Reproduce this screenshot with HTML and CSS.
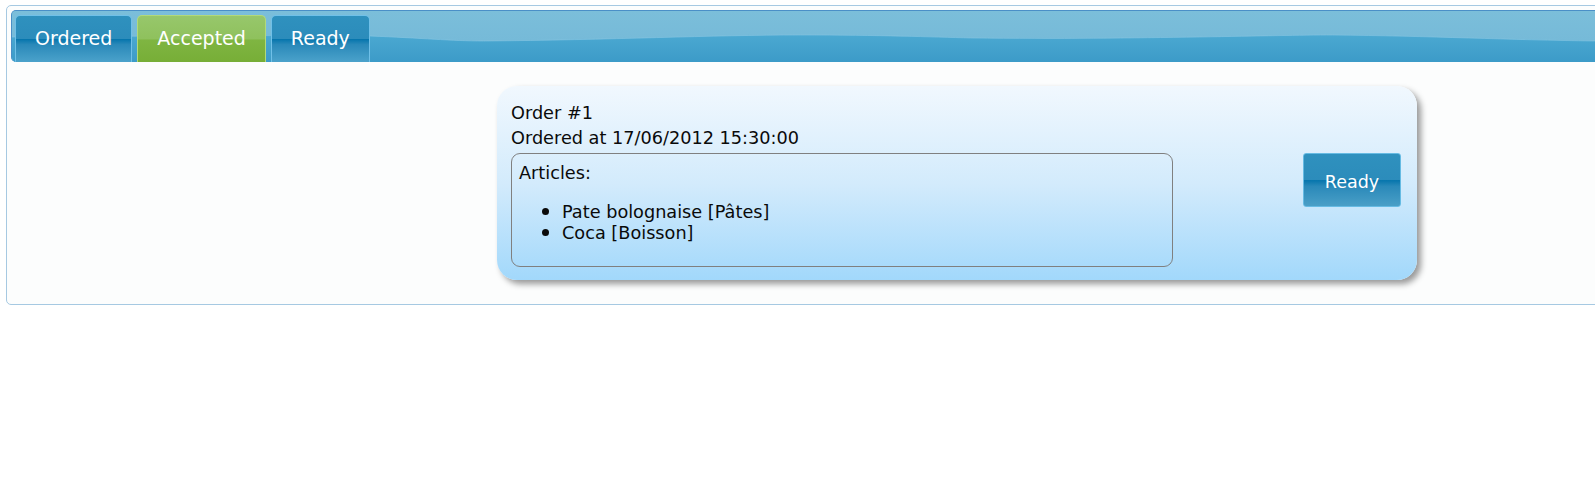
FILE: index.html
```html
<!DOCTYPE html>
<html>
<head>
<meta charset="utf-8">
<title>Orders</title>
<link rel="stylesheet" href="styles.css">
</head>
<body>
<div class="tabs">
  <div class="tab-header">
    <svg class="wave" viewBox="0 0 1892 51" preserveAspectRatio="none" aria-hidden="true">
      <defs>
        <linearGradient id="top" x1="0" y1="0" x2="0" y2="1">
          <stop offset="0" stop-color="#7bbeda"/>
          <stop offset="1" stop-color="#72b7d7"/>
        </linearGradient>
        <linearGradient id="bottom" x1="0" y1="0" x2="0" y2="1">
          <stop offset="0" stop-color="#4ba8d1"/>
          <stop offset="1" stop-color="#3c9bc8"/>
        </linearGradient>
      </defs>
      <rect x="0" y="0" width="1892" height="51" fill="url(#top)"/>
      <path d="M0 26 C 150 25 300 24 358 25 C 410 27 440 30 472 30 C 600 29 700 24 789 24 C 870 24 920 26 960 27 C 1050 28 1120 27 1189 26 C 1250 25 1290 24 1322 24 C 1420 25 1500 29 1584 30 C 1700 30 1800 29 1892 28 L 1892 51 L 0 51 Z" fill="url(#bottom)"/>
      <path d="M0 26 C 150 25 300 24 358 25 C 410 27 440 30 472 30 C 600 29 700 24 789 24 C 870 24 920 26 960 27 C 1050 28 1120 27 1189 26 C 1250 25 1290 24 1322 24 C 1420 25 1500 29 1584 30 C 1700 30 1800 29 1892 28" fill="none" stroke="#86c6e2" stroke-width="1" opacity="0.6"/>
    </svg>
    <ul class="tab-nav">
      <li class="tab">Ordered</li>
      <li class="tab tab-active">Accepted</li>
      <li class="tab">Ready</li>
    </ul>
  </div>
  <div class="panel">
    <div class="order-card">
      <div class="order-info">
        <p class="order-line">Order #1</p>
        <p class="order-line">Ordered at 17/06/2012 15:30:00</p>
        <div class="articles">
          <p class="articles-title">Articles:</p>
          <ul class="article-list">
            <li>Pate bolognaise [Pâtes]</li>
            <li>Coca [Boisson]</li>
          </ul>
        </div>
      </div>
      <button class="ready-btn" type="button">Ready</button>
    </div>
  </div>
</div>
</body>
</html>
```

FILE: styles.css
```css
html, body {
  overflow: hidden;
}

body {
  margin: 0;
  background: #ffffff;
  font-family: "DejaVu Sans", Verdana, sans-serif;
  color: #0a0a0a;
}

.tabs {
  box-sizing: border-box;
  width: 1902px;
  margin: 5px 0 0 6px;
  padding: 4px 4px 0;
  border: 1px solid #a6c9e2;
  border-radius: 5px;
  background: #fcfdfd;
}

.tab-header {
  position: relative;
  box-sizing: border-box;
  height: 52px;
  border: 1px solid #4a8fc7;
  border-bottom: none;
  border-radius: 5px 5px 0 5px;
  overflow: hidden;
  background: #5aa9d2;
}

.wave {
  position: absolute;
  left: 0;
  top: 0;
  width: 100%;
  height: 100%;
  display: block;
}

.tab-nav {
  position: relative;
  display: flex;
  align-items: flex-end;
  gap: 5px;
  height: 100%;
  margin: 0;
  padding: 0 0 0 3px;
  list-style: none;
}

.tab {
  box-sizing: border-box;
  height: 47px;
  padding: 0 19px;
  border: 1px solid #70c0e8;
  border-bottom: none;
  border-radius: 5px 5px 0 0;
  background: linear-gradient(to bottom, #2f91be 0%, #2c8cbb 50%, #0776ad 51%, #2a89b9 62%, #4ba2cb 100%);
  color: #ffffff;
  font-size: 19px;
  line-height: 44px;
}

.tab-active {
  border-color: #b2d97a;
  background: linear-gradient(to bottom, #97c76b 0%, #8fc15d 50%, #7fb542 52%, #77ae37 100%);
}

.panel {
  padding: 24px 0 24px;
}

.order-card {
  box-sizing: border-box;
  display: flex;
  justify-content: space-between;
  width: 920px;
  height: 194px;
  margin: 0 auto;
  padding: 15px 16px 13px 14px;
  border-radius: 20px;
  background: linear-gradient(to bottom, #f1f8fe 0%, #d3ebfc 50%, #a2d8fb 100%);
  box-shadow: 4px 4px 6px rgba(0, 0, 0, 0.4);
  font-size: 17.7px;
}

.order-info {
  width: 662px;
}

.order-line {
  margin: 0;
  line-height: 25px;
}

.articles {
  box-sizing: border-box;
  height: 114px;
  margin-top: 2px;
  padding: 0 7px;
  border: 1px solid #808080;
  border-radius: 9px;
}

.articles-title {
  margin: 9px 0 0;
  line-height: 20px;
}

.article-list {
  margin: 18px 0 0;
  padding-left: 43px;
  line-height: 20px;
}

.article-list li::marker {
  font-size: 1.2em;
}

.ready-btn {
  box-sizing: border-box;
  align-self: flex-start;
  width: 98px;
  height: 54px;
  margin-top: 52px;
  padding: 3px 0 0;
  border: 1px solid #66bbe3;
  border-radius: 3px;
  background: linear-gradient(to bottom, #2f91be 0%, #2c8cbb 50%, #0776ad 51%, #2a89b9 62%, #4a9fc7 100%);
  color: #ffffff;
  font-family: "DejaVu Sans", Verdana, sans-serif;
  font-size: 17.5px;
}
```
